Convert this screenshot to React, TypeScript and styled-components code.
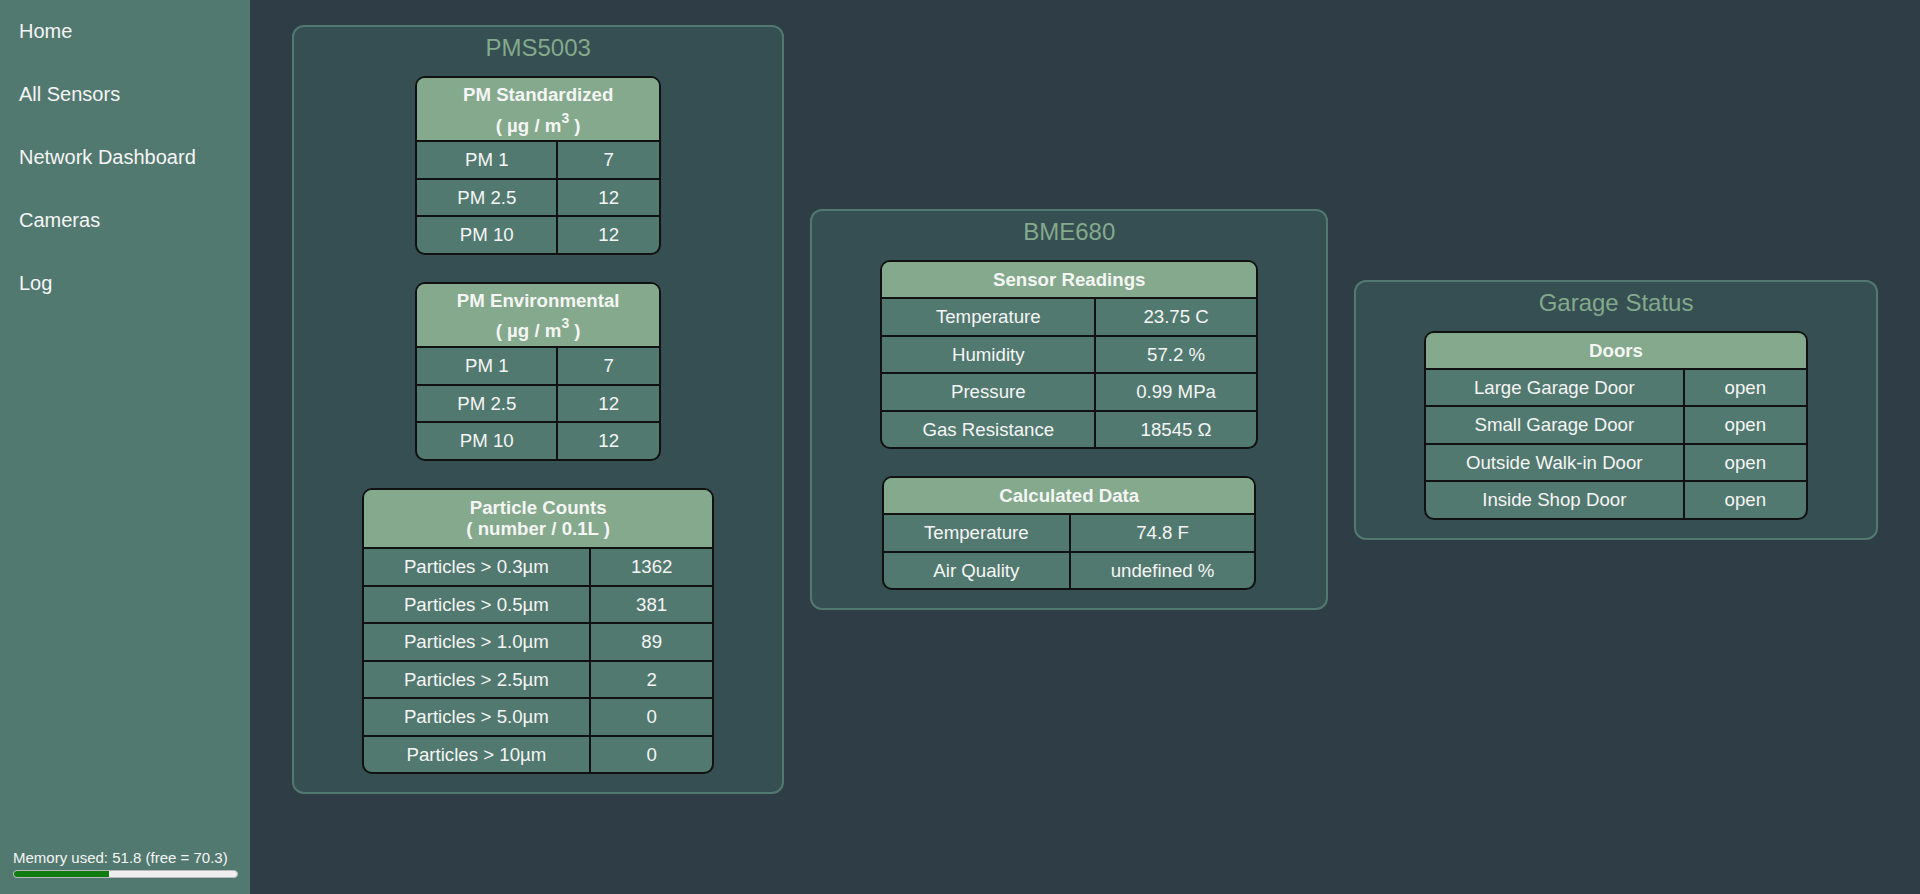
import React from 'react';
import styled, {createGlobalStyle} from 'styled-components';

const GlobalStyle = createGlobalStyle`
  html, body {
    margin: 0;
    padding: 0;
    background: #2f3e46;
    font-family: "Liberation Sans", Arial, sans-serif;
    color: whitesmoke;
  }
`

const Layout = styled.div`
  display: flex;
  height: 100vh;
  min-height: 894px;
`

const Sidebar = styled.nav`
  width: 250px;
  flex-shrink: 0;
  background: #52796f;
  display: flex;
  flex-direction: column;
`

const NavLink = styled.a`
  display: block;
  padding: 20px 19px;
  font-size: 20px;
  color: whitesmoke;
  text-decoration: none;
  cursor: pointer;
`

const Memory = styled.div`
  margin-top: auto;
  padding: 0 12px 16px 13px;
  font-size: 15px;
`

const MemoryBar = styled.div`
  margin-top: 4px;
  width: 225px;
  height: 8px;
  box-sizing: border-box;
  background: #efefef;
  border: 1px solid #b9b9b9;
  border-radius: 4px;
  overflow: hidden;
`

const MemoryFill = styled.div`
  height: 100%;
  background: #107c10;
`

const Main = styled.main`
  flex: 1;
  padding-top: 25px;
`

const PanelRow = styled.div`
  display: flex;
  justify-content: center;
  align-items: center;
  gap: 26px;
`

const Panel = styled.section`
  padding: 7px 68px 18px;
  background: #354f52;
  border: 2px solid #52796f;
  border-radius: 12px;
  display: flex;
  flex-direction: column;
  align-items: center;
`

const PanelTitle = styled.h2`
  margin: 0 0 14px;
  font-size: 24px;
  font-weight: normal;
  color: #84a98c;
`

const Tables = styled.div`
  display: flex;
  flex-direction: column;
  align-items: center;
  gap: 27px;
`

const Table = styled.table`
  border-collapse: separate;
  border-spacing: 0;
  border: 2px solid #111;
  border-radius: 10px;
  overflow: hidden;
  font-size: 14pt;
  line-height: 21.5px;
  color: whitesmoke;
  background: #52796f;
`

const HeadCell = styled.th`
  background: #84a98c;
  font-weight: bold;
  padding: 7px 20px 6.5px;

  &:has(br) {
    padding-bottom: 7.5px;
  }

  &:has(sup) {
    padding: 6px 20px 4px;
  }

  sup {
    font-size: 14px;
    vertical-align: 9.4px;
    line-height: 24px;
  }
`

const Cell = styled.td`
  padding: 7px 40px;
  text-align: center;
  border-top: 2px solid #111;
  white-space: nowrap;

  & + & {
    border-left: 2px solid #111;
  }
`

type Row = [string, string];

const DataTable = ({title, rows}: { title: React.ReactNode; rows: Row[] }) => (
    <Table>
        <thead>
        <tr>
            <HeadCell colSpan={2}>{title}</HeadCell>
        </tr>
        </thead>
        <tbody>
        {rows.map(([label, value]) => (
            <tr key={label}>
                <Cell>{label}</Cell>
                <Cell>{value}</Cell>
            </tr>
        ))}
        </tbody>
    </Table>
)

const massUnit = <>( µg / m<sup>3</sup> )</>

const pmRows: Row[] = [['PM 1', '7'], ['PM 2.5', '12'], ['PM 10', '12']]

const particleRows: Row[] = [
    ['Particles > 0.3µm', '1362'],
    ['Particles > 0.5µm', '381'],
    ['Particles > 1.0µm', '89'],
    ['Particles > 2.5µm', '2'],
    ['Particles > 5.0µm', '0'],
    ['Particles > 10µm', '0'],
]

const sensorRows: Row[] = [
    ['Temperature', '23.75 C'],
    ['Humidity', '57.2 %'],
    ['Pressure', '0.99 MPa'],
    ['Gas Resistance', '18545 Ω'],
]

const calcRows: Row[] = [['Temperature', '74.8 F'], ['Air Quality', 'undefined %']]

const doorRows: Row[] = [
    ['Large Garage Door', 'open'],
    ['Small Garage Door', 'open'],
    ['Outside Walk-in Door', 'open'],
    ['Inside Shop Door', 'open'],
]

const used = 51.8
const free = 70.3

export default function App() {
    return (
        <Layout>
            <GlobalStyle/>
            <Sidebar>
                <NavLink>Home</NavLink>
                <NavLink>All Sensors</NavLink>
                <NavLink>Network Dashboard</NavLink>
                <NavLink>Cameras</NavLink>
                <NavLink>Log</NavLink>
                <Memory>
                    Memory used: {used} (free = {free})
                    <MemoryBar>
                        <MemoryFill style={{width: `${(used / (used + free)) * 100}%`}}/>
                    </MemoryBar>
                </Memory>
            </Sidebar>
            <Main>
                <PanelRow>
                    <Panel>
                        <PanelTitle>PMS5003</PanelTitle>
                        <Tables>
                            <DataTable title={<>PM Standardized<br/>{massUnit}</>} rows={pmRows}/>
                            <DataTable title={<>PM Environmental<br/>{massUnit}</>} rows={pmRows}/>
                            <DataTable title={<>Particle Counts<br/>( number / 0.1L )</>} rows={particleRows}/>
                        </Tables>
                    </Panel>
                    <Panel>
                        <PanelTitle>BME680</PanelTitle>
                        <Tables>
                            <DataTable title="Sensor Readings" rows={sensorRows}/>
                            <DataTable title="Calculated Data" rows={calcRows}/>
                        </Tables>
                    </Panel>
                    <Panel>
                        <PanelTitle>Garage Status</PanelTitle>
                        <Tables>
                            <DataTable title="Doors" rows={doorRows}/>
                        </Tables>
                    </Panel>
                </PanelRow>
            </Main>
        </Layout>
    )
}
